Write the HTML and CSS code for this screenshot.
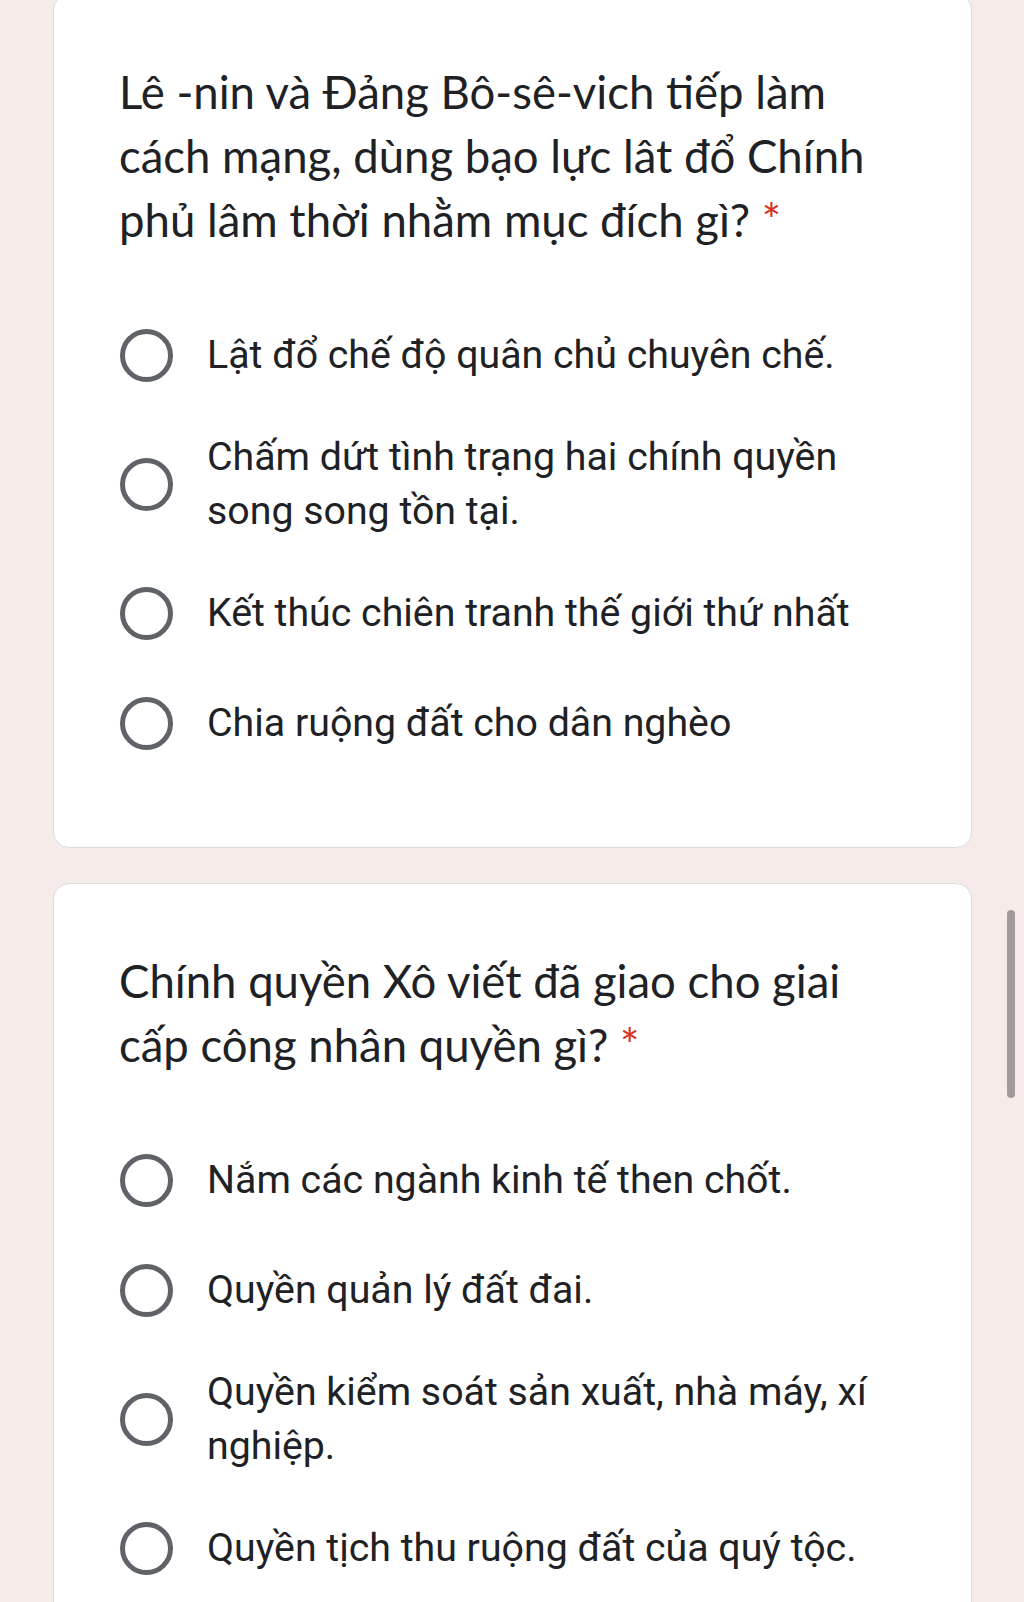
FILE: index.html
```html
<!DOCTYPE html>
<html lang="vi">
<head>
    <meta charset="UTF-8">
    <meta name="viewport" content="width=device-width, initial-scale=1.0">
    <title>Câu hỏi trắc nghiệm</title>
    <link rel="stylesheet" href="styles.css">
</head>
<body>
    <div class="form">
        <div class="card card-first">
            <div class="question">Lê -nin và Đảng Bô-sê-vich tiếp làm cách mạng, dùng bạo lực lât đổ Chính phủ lâm thời nhằm mục đích gì? <span class="required">*</span></div>
            <div class="options">
                <label class="option"><span class="radio"></span><span class="option-text">Lật đổ chế độ quân chủ chuyên chế.</span></label>
                <label class="option"><span class="radio"></span><span class="option-text">Chấm dứt tình trạng hai chính quyền song song tồn tại.</span></label>
                <label class="option"><span class="radio"></span><span class="option-text">Kết thúc chiên tranh thế giới thứ nhất</span></label>
                <label class="option"><span class="radio"></span><span class="option-text">Chia ruộng đất cho dân nghèo</span></label>
            </div>
        </div>

        <div class="card">
            <div class="question">Chính quyền Xô viết đã giao cho giai cấp công nhân quyền gì? <span class="required">*</span></div>
            <div class="options">
                <label class="option"><span class="radio"></span><span class="option-text">Nắm các ngành kinh tế then chốt.</span></label>
                <label class="option"><span class="radio"></span><span class="option-text">Quyền quản lý đất đai.</span></label>
                <label class="option"><span class="radio"></span><span class="option-text">Quyền kiểm soát sản xuất, nhà máy, xí nghiệp.</span></label>
                <label class="option"><span class="radio"></span><span class="option-text">Quyền tịch thu ruộng đất của quý tộc.</span></label>
            </div>
        </div>
    </div>

    <div class="scrollbar"></div>
</body>
</html>
```
FILE: styles.css
```css
body {
    margin: 0;
    background: #f6ebe8;
    font-family: 'Roboto', sans-serif;
    color: #202124;
    overflow: hidden;
}
.form {
    padding: 0 52px 0 53px;
}
.card {
    background: #ffffff;
    border: 1px solid #dadce0;
    border-radius: 16px;
    padding: 65px 67px 89px 66px;
    margin-bottom: 35px;
}
.card-first {
    margin-top: -6px; /* page is scrolled a little */
}
.question {
    margin-left: -1px;
    font-family: 'Lato', sans-serif;
    font-size: 45.5px;
    line-height: 64px;
    color: #202124;
}
.required {
    color: #d93025;
}
.options {
    display: flex;
    flex-direction: column;
    gap: 40px;
    margin-top: 68px;
}
.option {
    display: flex;
    align-items: center;
    min-height: 70px;
}
.radio {
    flex: none;
    width: 53px;
    height: 53px;
    box-sizing: border-box;
    border: 5px solid #5f6368;
    border-radius: 50%;
    margin-right: 34px;
}
.option-text {
    font-size: 39.3px;
    line-height: 54px;
}
.scrollbar {
    position: fixed;
    left: 1007px;
    top: 910px;
    width: 8px;
    height: 188px;
    border-radius: 4px;
    background: #a19a98;
}
```
